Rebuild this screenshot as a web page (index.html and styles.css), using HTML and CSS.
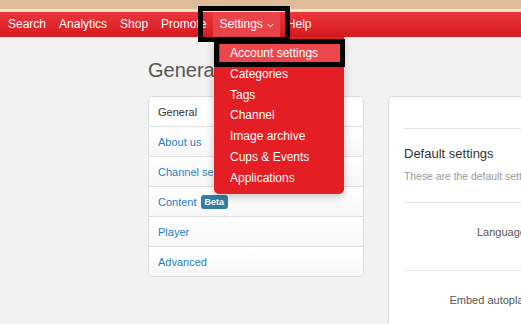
FILE: index.html
```html
<!DOCTYPE html>
<html>
<head>
<meta charset="utf-8">
<link rel="stylesheet" href="styles.css">
</head>
<body>
<div class="topbar"></div>
<nav class="navbar">
  <a class="nav-link">Search</a>
  <a class="nav-link">Analytics</a>
  <a class="nav-link">Shop</a>
  <a class="nav-link">Promote</a>
  <a class="nav-link active">Settings<svg class="chev" width="7" height="5" viewBox="0 0 7 5"><polyline points="0.5,0.8 3.5,3.8 6.5,0.8" fill="none" stroke="#fff" stroke-width="1"/></svg></a>
  <a class="nav-link">Help</a>
</nav>
<main class="page">
  <h1 class="title">General</h1>
  <div class="layout">
    <ul class="side">
      <li class="side-item current">General</li>
      <li class="side-item">About us</li>
      <li class="side-item">Channel settings</li>
      <li class="side-item">Content <span class="badge">Beta</span></li>
      <li class="side-item">Player</li>
      <li class="side-item">Advanced</li>
    </ul>
    <section class="panel">
      <div class="panel-head"></div>
      <div class="block">
        <h2 class="block-title">Default settings</h2>
        <p class="block-desc">These are the default settings for your channel</p>
      </div>
      <div class="row"><span class="label">Language:</span></div>
      <div class="row"><span class="label">Embed autoplay</span></div>
    </section>
  </div>
</main>
<ul class="dropdown">
  <li class="dd-item hover">Account settings</li>
  <li class="dd-item">Categories</li>
  <li class="dd-item">Tags</li>
  <li class="dd-item">Channel</li>
  <li class="dd-item">Image archive</li>
  <li class="dd-item">Cups &amp; Events</li>
  <li class="dd-item">Applications</li>
</ul>
<div class="mark mark-settings"></div>
<div class="mark mark-account"></div>
</body>
</html>
```
FILE: styles.css
```css
html, body {
  margin: 0;
  padding: 0;
  overflow: hidden;
}
body {
  background: #f2f2f2;
  font-family: "Liberation Sans", Arial, Helvetica, sans-serif;
  width: 521px;
  height: 324px;
  position: relative;
}
.topbar {
  height: 9px;
  background: #dfbb97;
  border-bottom: 3px solid #fde2c0;
}
.navbar {
  height: 25px;
  display: flex;
  gap: 1px;
  padding-left: 2px;
  background: linear-gradient(#e8363c, #d71b21);
}
.nav-link {
  display: flex;
  align-items: center;
  padding: 0 6px;
  color: #fff;
  font-size: 12px;
  line-height: 25px;
}
.nav-link.active {
  background: #ea4449;
}
.chev {
  margin-left: 4px;
  margin-top: 1px;
}
.page {
  padding: 21px 0 0 148px;
}
.title {
  margin: 0 0 14px;
  font-size: 20px;
  line-height: 24px;
  font-weight: 300;
  color: #555;
}
.layout {
  display: flex;
  gap: 24px;
  align-items: flex-start;
}
.side {
  list-style: none;
  margin: 0;
  padding: 0;
  width: 214px;
  flex-shrink: 0;
  border: 1px solid #dcdcdc;
  border-radius: 4px;
  background: #fff;
  overflow: hidden;
}
.side-item {
  height: 29px;
  display: flex;
  align-items: center;
  padding-left: 9px;
  font-size: 11px;
  color: #1e80c4;
  background: linear-gradient(#ffffff, #f7f7f7);
  border-top: 1px solid #dfdfdf;
  white-space: nowrap;
}
.side-item:first-child {
  border-top: none;
}
.side-item.current {
  color: #333;
  background: #fff;
}
.badge {
  display: inline-block;
  margin-left: 4px;
  padding: 0 4px;
  height: 14px;
  line-height: 14px;
  background: #327ea5;
  color: #fff;
  font-size: 9px;
  font-weight: bold;
  border-radius: 3px;
}
.panel {
  width: 300px;
  flex-shrink: 0;
  height: 260px;
  background: #fff;
  border: 1px solid #dcdcdc;
  border-radius: 4px;
  padding: 0 0 0 15px;
}
.panel-head {
  height: 31px;
  border-bottom: 1px solid #e4e4e4;
}
.block {
  padding: 17px 0 0;
  height: 56px;
  border-bottom: 1px solid #e4e4e4;
}
.block-title {
  margin: 0;
  font-size: 13px;
  line-height: 16px;
  font-weight: normal;
  color: #333;
}
.block-desc {
  margin: 8px 0 0;
  font-size: 10.4px;
  line-height: 14px;
  color: #999;
  white-space: nowrap;
}
.row {
  height: 44px;
  display: flex;
  align-items: flex-start;
  padding-top: 23px;
  border-bottom: 1px solid #e4e4e4;
}
.label {
  width: 125px;
  text-align: right;
  font-size: 11px;
  line-height: 13px;
  color: #555;
  white-space: nowrap;
}
.dropdown {
  position: absolute;
  left: 214px;
  top: 37px;
  width: 130px;
  margin: 0;
  padding: 6px 0 5px;
  list-style: none;
  background: #e41e25;
  border-radius: 0 0 5px 5px;
  box-shadow: 0 3px 9px rgba(0, 0, 0, 0.22);
}
.dd-item {
  height: 20.8px;
  line-height: 20.8px;
  padding-left: 16px;
  font-size: 12px;
  color: #fff;
  white-space: nowrap;
}
.dd-item.hover {
  margin: 0 4px 0 6px;
  padding-left: 10px;
  background: #ec474c;
}
.mark {
  position: absolute;
  border: 5px solid #000;
  box-sizing: border-box;
}
.mark-settings {
  left: 198px;
  top: 6px;
  width: 92px;
  height: 36px;
}
.mark-account {
  left: 214px;
  top: 39px;
  width: 131px;
  height: 28px;
}
```
